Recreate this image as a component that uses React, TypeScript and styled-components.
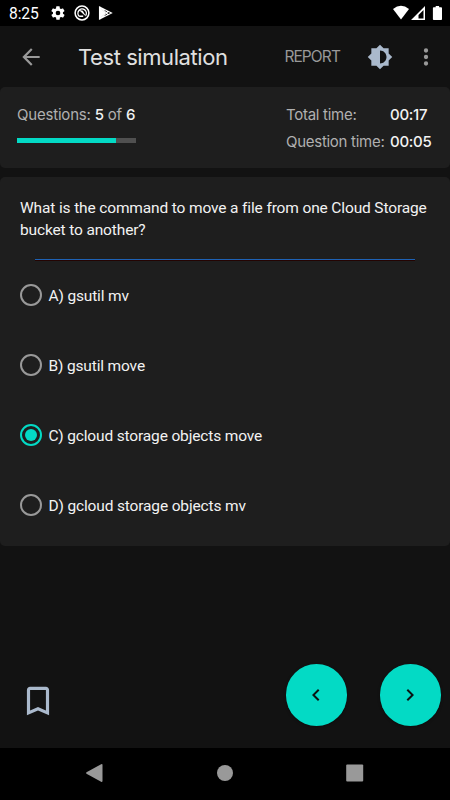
import React, { useState } from "react";
import styled, { createGlobalStyle } from "styled-components";

const Global = createGlobalStyle`
  * { box-sizing: border-box; }
  body { margin: 0; background: #121212; font-family: Roboto, sans-serif; }
  button { border: 0; padding: 0; background: none; font: inherit; color: inherit; }
`;

const Screen = styled.div`
  width: 450px;
  height: 800px;
  display: flex;
  flex-direction: column;
  background: #121212;
  overflow: hidden;
`;

const StatusBar = styled.header`
  height: 26px;
  flex: none;
  background: #000;
  color: #fff;
  display: flex;
  align-items: center;
  justify-content: space-between;
  padding: 0 5px 0 9px;
`;

const Cluster = styled.div<{ $gap: number }>`
  display: flex;
  align-items: center;
  gap: ${(p) => p.$gap}px;
`;

const Clock = styled.span`
  width: 33px;
  font-size: 15.6px;
  letter-spacing: -0.1px;
  line-height: 24px;
  padding-top: 1px;
  white-space: nowrap;
`;

const AppBar = styled.div`
  height: 61px;
  flex: none;
  display: flex;
  align-items: center;
  padding: 0 11px 0 18px;
  color: #999;
`;

const IconButton = styled.button<{ $size: number }>`
  width: ${(p) => p.$size}px;
  height: ${(p) => p.$size}px;
  display: flex;
  align-items: center;
  justify-content: center;
  flex: none;
`;

const Title = styled.h1`
  margin: 0 0 0 34px;
  flex: 1;
  font: 400 22px/28px Inter, sans-serif;
  letter-spacing: -0.43px;
  color: #e0e0e0;
  white-space: nowrap;
`;

const Report = styled.button`
  && {
    font: 400 15.5px/20px Inter, sans-serif;
    letter-spacing: -0.9px;
    margin-right: 27px;
    color: #999;
  }
`;

const MoreButton = styled(IconButton)`
  margin-left: 20px;
`;

const Card = styled.section<{ $height: number }>`
  height: ${(p) => p.$height}px;
  flex: none;
  background: #1e1e1e;
  border-radius: 5px;
`;

const Summary = styled(Card)`
  display: flex;
  justify-content: space-between;
  padding: 14px 17px 0;
  margin-bottom: 9px;
  font: 400 15px/27px Inter, sans-serif;
  color: #b0b0b0;
`;

const Progress = styled.div`
  width: 118.5px;
`;

const Count = styled.div`
  letter-spacing: -0.2px;
  white-space: nowrap;
`;

const Strong = styled.span`
  color: #f2f2f2;
  font-weight: 500;
`;

const Track = styled.div`
  height: 5px;
  margin-top: 10px;
  background: #505050;
`;

const Fill = styled.div`
  height: 100%;
  background: #03dac5;
`;

const Times = styled.div`
  display: grid;
  grid-template-columns: 104px 43px;
  grid-auto-rows: 27px;
  white-space: nowrap;
  letter-spacing: -0.28px;
`;

const QuestionCard = styled(Card)`
  padding: 20px 15px 0 20px;
`;

const Question = styled.p`
  margin: 0;
  font-size: 15.5px;
  letter-spacing: -0.14px;
  line-height: 22px;
  color: #f2f2f2;
`;

const Rule = styled.hr`
  height: 2px;
  border: 0;
  border-bottom: 1px solid #240402;
  margin: 18px 20px 0 15px;
  background: #1e62b4;
`;

const Options = styled.div`
  display: flex;
  flex-direction: column;
  margin-top: -1px;
`;

const Option = styled.label`
  height: 70px;
  display: flex;
  align-items: center;
  gap: 6.5px;
  font-size: 15.5px;
  letter-spacing: -0.15px;
  color: #f2f2f2;
`;

const OptionText = styled.span`
  padding-top: 1px;
`;

const Radio = styled.span<{ $on: boolean }>`
  width: 22px;
  height: 22px;
  border: 2px solid ${(p) => (p.$on ? "#03dac5" : "#999")};
  border-radius: 50%;
  display: flex;
  align-items: center;
  justify-content: center;
  &::after {
    content: "";
    width: 12px;
    height: 12px;
    border-radius: 50%;
    background: ${(p) => (p.$on ? "#03dac5" : "transparent")};
  }
`;

const HiddenInput = styled.input`
  display: none;
`;

const Actions = styled.div`
  flex: 1;
  display: flex;
  align-items: flex-end;
  padding: 0 9px 22px 19px;
`;

const Bookmark = styled(IconButton)`
  margin: 0 auto 5.5px 0;
`;

const Fab = styled(IconButton)`
  border-radius: 50%;
  background: #03dac5;
  margin-left: 32.5px;
  color: #0a1413;
  box-shadow: 0 1px 3px rgba(0, 0, 0, 0.35);
`;

const NavBar = styled.nav`
  height: 52.5px;
  flex: none;
  background: #000;
  color: #999;
  display: flex;
  justify-content: center;
  align-items: center;
  gap: 108px;
  padding: 0 1px 1px 0;
`;

const choices = [
  "A) gsutil mv",
  "B) gsutil move",
  "C) gcloud storage objects move",
  "D) gcloud storage objects mv",
];

function Icon({ d, size, color = "currentColor" }: { d: string; size: number; color?: string }) {
  return (
    <svg width={size} height={size} viewBox="0 0 24 24" fill={color} fillRule="evenodd">
      <path d={d} />
    </svg>
  );
}

const paths = {
  gear: "M19.4 13a7.5 7.5 0 0 0 0-2l2.1-1.6a.5.5 0 0 0 .1-.7l-2-3.4a.5.5 0 0 0-.6-.2l-2.5 1a7.3 7.3 0 0 0-1.7-1l-.4-2.7a.5.5 0 0 0-.5-.4h-4a.5.5 0 0 0-.5.4L9 5.1a7.7 7.7 0 0 0-1.7 1l-2.5-1a.5.5 0 0 0-.6.2l-2 3.4a.5.5 0 0 0 .1.7L4.5 11a7.9 7.9 0 0 0 0 2l-2.1 1.6a.5.5 0 0 0-.1.7l2 3.4c.1.2.4.3.6.2l2.5-1a7.3 7.3 0 0 0 1.7 1l.4 2.7c0 .2.2.4.5.4h4c.3 0 .5-.2.5-.4l.4-2.7a7.7 7.7 0 0 0 1.7-1l2.5 1c.2.1.5 0 .6-.2l2-3.4a.5.5 0 0 0-.1-.7zM12 15.5a3.5 3.5 0 1 1 0-7 3.5 3.5 0 0 1 0 7z",
  back: "M20 11H7.83l5.59-5.59L12 4l-8 8 8 8 1.41-1.41L7.83 13H20z",
  brightness:
    "M20 15.31 23.31 12 20 8.69V4h-4.69L12 .69 8.69 4H4v4.69L.69 12 4 15.31V20h4.69L12 23.31 15.31 20H20zM12 18V6c3.31 0 6 2.69 6 6s-2.69 6-6 6z",
  more: "M12 8a2 2 0 1 0 0-4 2 2 0 0 0 0 4zm0 2a2 2 0 1 0 0 4 2 2 0 0 0 0-4zm0 6a2 2 0 1 0 0 4 2 2 0 0 0 0-4z",
  bookmark: "M17 3H7c-1.1 0-2 .9-2 2v16l7-3 7 3V5c0-1.1-.9-2-2-2zm0 15-5-2.18L7 18V5h10z",
  left: "M15.41 7.41 14 6l-6 6 6 6 1.41-1.41L10.83 12z",
  right: "M8.59 16.59 10 18l6-6-6-6-1.41 1.41L13.17 12z",
};

export default function App() {
  const [selected, setSelected] = useState(2);
  return (
    <>
      <Global />
      <Screen>
        <StatusBar>
          <Cluster $gap={8}>
            <Clock>8:25</Clock>
            <Icon d={paths.gear} size={16} />
            <svg width="16" height="16" viewBox="0 0 16 16" fill="none" stroke="currentColor">
              <circle cx="8" cy="8" r="6.9" strokeWidth="1.5" />
              <path d="M5.2 11.2a4.2 4.2 0 1 1 6.4-.6M5.2 11.2h4" strokeWidth="1.4" />
              <path d="M4.6 4.8 8.8 5.8l3.4 6z" fill="currentColor" stroke="none" />
            </svg>
            <svg width="16" height="16" viewBox="0 0 16 16" fill="none" stroke="currentColor">
              <path d="M1.5 2v12L13.5 8zM2 2l8.5 8M2 14l8.5-8" strokeWidth="1.1" />
              <path d="M2 2.5v11L7 8z" fill="currentColor" />
            </svg>
          </Cluster>
          <Cluster $gap={1}>
            <svg width="18" height="16" viewBox="0 0 18 16" fill="currentColor">
              <path d="M1 4Q9-2.4 17 4L9 14.5z" />
            </svg>
            <svg width="15" height="16" viewBox="0 0 15 16" fill="currentColor" fillRule="evenodd">
              <path d="M0 15 14 1v14zM7.5 13.5h5v-8.5L7.5 10z" />
            </svg>
            <svg width="18" height="16" viewBox="0 0 18 16" fill="currentColor">
              <path d="M8.7 1h3.4v1.2h2q.9 0 .9.8v11.2q0 .8-.9.8H6.8q-.9 0-.9-.8V3q0-.8.9-.8h1.9z" />
            </svg>
          </Cluster>
        </StatusBar>

        <AppBar>
          <IconButton $size={26} aria-label="Back">
            <Icon d={paths.back} size={26} />
          </IconButton>
          <Title>Test simulation</Title>
          <Report>REPORT</Report>
          <IconButton $size={26} aria-label="Brightness">
            <Icon d={paths.brightness} size={26} color="#aab9cc" />
          </IconButton>
          <MoreButton $size={26} aria-label="More">
            <Icon d={paths.more} size={26} />
          </MoreButton>
        </AppBar>

        <Summary $height={81}>
          <Progress>
            <Count>
              Questions: <Strong>5</Strong> of <Strong>6</Strong>
            </Count>
            <Track>
              <Fill style={{ width: `${(5 / 6) * 100}%` }} />
            </Track>
          </Progress>
          <Times>
            <span>Total time:</span>
            <Strong>00:17</Strong>
            <span>Question time:</span>
            <Strong>00:05</Strong>
          </Times>
        </Summary>

        <QuestionCard $height={369}>
          <Question>What is the command to move a file from one Cloud Storage bucket to another?</Question>
          <Rule />
          <Options>
            {choices.map((text, i) => (
              <Option key={text}>
                <HiddenInput type="radio" checked={i === selected} onChange={() => setSelected(i)} />
                <Radio $on={i === selected} />
                <OptionText>{text}</OptionText>
              </Option>
            ))}
          </Options>
        </QuestionCard>

        <Actions>
          <Bookmark $size={38} aria-label="Bookmark">
            <Icon d={paths.bookmark} size={38} color="#aab9cc" />
          </Bookmark>
          <Fab $size={61.5} aria-label="Previous">
            <Icon d={paths.left} size={24} />
          </Fab>
          <Fab $size={61.5} aria-label="Next">
            <Icon d={paths.right} size={24} />
          </Fab>
        </Actions>

        <NavBar>
          <svg width="22" height="22" viewBox="0 0 22 22" fill="currentColor">
            <path d="M2.5 10.2 17.1 2.3q1.4-.6 1.4.6v16.2q0 1.2-1.4.6L2.5 11.8q-1-.8 0-1.6z" />
          </svg>
          <svg width="22" height="22" viewBox="0 0 22 22" fill="currentColor">
            <circle cx="11" cy="11" r="8" />
          </svg>
          <svg width="22" height="22" viewBox="0 0 22 22" fill="currentColor">
            <rect x="2.2" y="2.5" width="17" height="17" rx="1" />
          </svg>
        </NavBar>
      </Screen>
    </>
  );
}
